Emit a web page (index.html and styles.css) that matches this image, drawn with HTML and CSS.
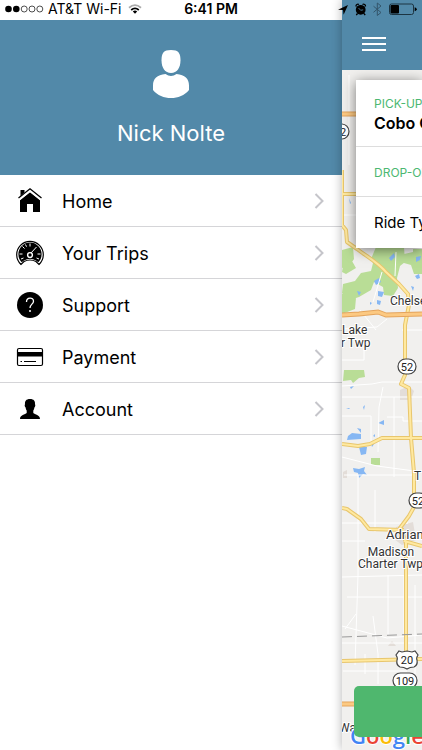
FILE: index.html
```html
<!DOCTYPE html>
<html lang="en">
<head>
    <meta charset="UTF-8">
    <meta name="viewport" content="width=device-width, initial-scale=1.0">
    <title>Menu</title>
    <link rel="stylesheet" href="styles.css">
</head>
<body>
    <!-- Status bar, lies over both panels -->
    <div class="status-bar">
        <div class="status-left">
            <svg width="39" height="8" viewBox="0 0 39 8">
                <circle cx="3.5" cy="4" r="3.3"/>
                <circle cx="11.3" cy="4" r="3.3"/>
                <g fill="none" stroke="#222" stroke-width="0.8">
                    <circle cx="19.2" cy="4" r="3"/>
                    <circle cx="27" cy="4" r="3"/>
                    <circle cx="34.8" cy="4" r="3"/>
                </g>
            </svg>
            <span>AT&amp;T Wi-Fi</span>
            <svg class="wifi" width="14" height="10" viewBox="0 0 14 10" fill="none" stroke-width="1.8">
                <path d="M1 3.7Q7-1.5 13 3.7" stroke="#aaa"/>
                <path d="M3.2 6Q7 2.8 10.8 6" stroke="#000"/>
                <path d="M4.8 7.4Q7 5.7 9.2 7.4L7 9.8Z" fill="#000"/>
            </svg>
        </div>
        <span class="status-time">6:41 PM</span>
        <div class="status-right">
            <svg width="79" height="14" viewBox="0 0 79 14">
                <path d="M0 7.7 10 3 5.6 12.8 5 8Z"/>
                <circle cx="22.7" cy="7.8" r="4.9"/>
                <path d="M18 4.5a2 2 0 0 1 3-2M24.5 2.5a2 2 0 0 1 3 2M19.5 11.5l-1.2 1.6M26 11.5l1.2 1.6" fill="none" stroke="#000" stroke-width="1.3"/>
                <path d="M20.5 6l2.2 2.3 2.500-.5" fill="none" stroke="#5289a9" stroke-width="0.8"/>
                <path d="M35.5 4.2l7.5 6.3-3.700 3V1l3.700 3-7.500 6.300" fill="none" stroke="#34566b" stroke-width="1"/>
                <rect x="51.5" y="2" width="24" height="10.5" rx="2" fill="none" stroke="#1c3442" stroke-width="1"/>
                <rect x="52.5" y="3" width="8.5" height="8.5" rx="1"/>
                <path d="M76.7 5.2q2 .5 2 2t-2 2Z"/>
            </svg>
        </div>
    </div>

    <div class="screen">
        <!-- Side menu -->
        <aside class="drawer">
            <header class="profile">
                <svg width="38" height="50" viewBox="0 0 38 50" fill="#fff">
                    <path d="M19 1c7.500 0 9.500 3 9.500 10.500C28.500 18.500 25 24 19 24S9.500 18.500 9.500 11.500C9.500 4 11.500 1 19 1Z"/>
                    <path d="M13.500 25q5.500 4 11 0C33 26 37 29.500 37 36.500V41c-4.500 5.500-11 8-18 8s-13.500-2.500-18-8v-4.500C1 29.500 5 26 13.500 25Z"/>
                    <path d="M12.500 23q6.500 5 13 0" fill="none" stroke="#5289a9" stroke-width="1.300"/>
                </svg>
                <h1>Nick Nolte</h1>
            </header>
            <nav class="menu">
                <a href="#home">
                    <svg class="icon" width="28" height="28" viewBox="0 0 28 28">
                        <path d="M4 13 14 5l10 8v12h-7v-8h-6v8H4Z"/>
                        <path d="M4.500 3h4v4l-4 3.500Z"/>
                        <path d="M3 12 14 3.200 25 12" fill="none" stroke="#fff" stroke-width="3.200"/>
                        <path d="M2.500 11 14 1.800 25.500 11" fill="none" stroke="#000" stroke-width="1.300"/>
                    </svg>
                    <span>Home</span>
                    <svg class="chevron" width="10" height="16" viewBox="0 0 10 16"><path d="M1.500 1l7 7-7 7"/></svg>
                </a>
                <a href="#trips">
                    <svg class="icon" width="28" height="28" viewBox="0 0 28 28">
                        <path d="M5 25.500A13.300 13.300 0 1 1 23 25.500L20 22.500Q14 19.500 8 22.500Z" fill="#fff" stroke="#000" stroke-width="1.200"/>
                        <path d="M5.700 23.300A11.600 11.600 0 1 1 22.300 23.300L20 21.500Q14 18 8 21.500Z"/>
                        <path d="M14 4.500v3M6.500 7.500l2 2M3.500 15h3M21.500 15h3M5 20l2.500-1M23 20l-2.500-1M9.500 5.500l1 2.200M14.500 14.500l6-6.500" stroke="#fff" stroke-width="1"/>
                        <circle cx="14" cy="16" r="2.400" fill="#000" stroke="#fff" stroke-width="1.400"/>
                    </svg>
                    <span>Your Trips</span>
                    <svg class="chevron" width="10" height="16" viewBox="0 0 10 16"><path d="M1.500 1l7 7-7 7"/></svg>
                </a>
                <a href="#support">
                    <svg class="icon" width="28" height="28" viewBox="0 0 28 28">
                        <circle cx="14" cy="14" r="13"/>
                        <path d="M10.500 11c0-5 7-5 7-.8 0 3-3.500 3-3.500 6.800" fill="none" stroke="#fff" stroke-width="1.300"/>
                        <circle cx="14" cy="20" r="1" fill="#fff"/>
                    </svg>
                    <span>Support</span>
                    <svg class="chevron" width="10" height="16" viewBox="0 0 10 16"><path d="M1.500 1l7 7-7 7"/></svg>
                </a>
                <a href="#payment">
                    <svg class="icon" width="28" height="28" viewBox="0 0 28 28">
                        <rect x="1.500" y="5.500" width="25" height="17" rx="1.500" fill="#fff" stroke="#000" stroke-width="1.200"/>
                        <path d="M1.500 9h25v4.500h-25Z"/>
                        <path d="M4.500 18.500h1.500M8 18.500h12" stroke="#000" stroke-width="1"/>
                    </svg>
                    <span>Payment</span>
                    <svg class="chevron" width="10" height="16" viewBox="0 0 10 16"><path d="M1.500 1l7 7-7 7"/></svg>
                </a>
                <a href="#account">
                    <svg class="icon" width="28" height="28" viewBox="0 0 28 28">
                        <path d="M14 4c4 0 5.200 2.200 5 5.200.6.600.3 2.500-.5 3.100-.3 1.700-.7 2.500-1.200 3.200v2.500c1.500 1.700 6.700 1.800 6.700 6H4c0-4.200 5.200-4.300 6.700-6v-2.500c-.5-.7-.9-1.500-1.200-3.200-.8-.6-1.100-2.500-.5-3.100C8.800 6.200 10 4 14 4Z"/>
                    </svg>
                    <span>Account</span>
                    <svg class="chevron" width="10" height="16" viewBox="0 0 10 16"><path d="M1.500 1l7 7-7 7"/></svg>
                </a>
            </nav>
        </aside>

        <!-- Booking page, pushed to the right -->
        <main class="page">
            <header class="toolbar">
                <button class="menu-button" aria-label="Menu"><span></span><span></span><span></span></button>
            </header>
            <div class="map-area">
                <svg class="map" viewBox="342 70 80 680" preserveAspectRatio="xMinYMin slice">
                    <rect x="342" y="70" width="80" height="680" fill="#f1f0ee"/>
                    <!-- parks -->
                    <g fill="#b9dd96">
                        <path d="M342 250l11-3 1 12-4 6-8 3ZM343 266l9-5 4 7-10 6-4-2ZM376 247h28l1 15-5 4-3 12 1 10-5 8-9-1-1-8-9-5-3 8-12 7-9 3-8-7 1-9 12-3 6-8 10-2 2-8-2-4ZM342 294l8-4 6 8-1 11-13 5ZM413 249h9v25h-8l-3-9-7-2v-9l9-2Z"/>
                        <path d="M344 370h20l1 7-6 1-6 5-2-3-8 1ZM371 458h9v7h-9Z"/>
                    </g>
                    <!-- lakes -->
                    <g fill="#86b7f3">
                        <path d="M389 258l5-5 1 4-4 4ZM374 281l5-3 2 4-5 3ZM378 291l6 1-2 5-4-1ZM416 257l5-1-1 4-4 2ZM415 276l4-2 1 4-3 1ZM357 291l4 1-2 4ZM377 300l4 1-1 4-3-1ZM411 286l3 1-1 4ZM370 302l2 1-2 2ZM349 198l2 5-1 1Z"/>
                        <path d="M348 436l4-3 9 1v5l-14 1ZM359 447h8l-1 7-5 1ZM357 428l4 1v4ZM378 423l6-3v5ZM353 468l6 1 6-2-1 4 3 4-4-1-4 4-1-5-4-1ZM363 407l2-2-1 5ZM350 387l4-1-3 3ZM346 408h4l-1 1ZM373 436l2-2v3ZM371 443l3 1-2 3Z"/>
                    </g>
                    <g fill="#e3ddd8">
                        <path d="M400 390l9-4 5 5-3 9h-11ZM396 527l17-5 3 18-14 5-8-6ZM388 646l4-5 4 5ZM343 472l4-2v8h-4Z"/>
                    </g>
                    <!-- small roads -->
                    <g fill="none" stroke="#fff" stroke-width="1">
                        <path d="M349 75v90M342 215h14M342 386l30-2 10-2h40M342 397h80M383 387l-4 20-1 45M342 416h29v26M394 397v80M342 457l35 9 45 6M344 475h70M358 475v100l-3 90M342 523h66M342 541h23M387 417h16v4h19M342 577l80-2M347 597h75M388 575v60M356 614l-11 15M342 626l45 12 35-3M342 643h80M373 616l5 38v30M365 654v20M343 671h64M415 585v160M404 575v60M364 345v15h-22M342 329l35-2 10-8M360 310l16 20M382 272l-9 30M396 252l-1 24M402 330h20M375 490v42"/>
                    </g>
                    <!-- main roads -->
                    <g fill="none" stroke="#e8c66d" stroke-width="4" stroke-linejoin="round">
                        <path d="M342 194h15M342 170v55l4 5 1 12 10 7c12 9 20 13 29 23l13 12 9 10 1 11-4 20v50l-4 9 8 4 2 50 3 35v34l-5 9-9 12 6 14v120M342 444l16 2 12-2 12-6h40M342 508l5 1 14 10 8 10 35 1M404 541l18 5M342 661l80-2"/>
                    </g>
                    <g fill="none" stroke="#ffe9a0" stroke-width="2" stroke-linejoin="round">
                        <path d="M342 194h15M342 170v55l4 5 1 12 10 7c12 9 20 13 29 23l13 12 9 10 1 11-4 20v50l-4 9 8 4 2 50 3 35v34l-5 9-9 12 6 14v120M342 444l16 2 12-2 12-6h40M342 508l5 1 14 10 8 10 35 1M404 541l18 5M342 661l80-2"/>
                    </g>
                    <g fill="none" stroke="#e4a45c" stroke-width="5">
                        <path d="M342 114h17M342 315l17-1 19-2 8 3 36-1M342 704h14"/>
                    </g>
                    <g fill="none" stroke="#fcc982" stroke-width="3">
                        <path d="M342 114h17M342 315l17-1 19-2 8 3 36-1M342 704h14"/>
                    </g>
                    <path d="M342 637l80-3" fill="none" stroke="#999" stroke-width="1" stroke-dasharray="10 5"/>
                    <!-- road shields -->
                    <g fill="#fff" stroke="#444" stroke-width="1.200">
                        <rect x="333" y="124" width="16" height="15" rx="7.500"/>
                        <rect x="398" y="359" width="18" height="15" rx="7.500"/>
                        <rect x="409" y="493" width="18" height="15" rx="7.500"/>
                        <path d="M399 651l3 1 5-1 5 1 3-1 3 4q-2 3-1 5 1 5-3 7-4 0-7 2-3-2-7-2-4-2-3-7 1-2-1-5Z"/>
                        <rect x="393" y="673" width="24" height="15" rx="7.500"/>
                    </g>
                    <g class="shield-text">
                        <text x="343" y="136">2</text>
                        <text x="407" y="371">52</text>
                        <text x="418" y="505">52</text>
                        <text x="407" y="664">20</text>
                        <text x="405" y="685">109</text>
                    </g>
                    <g class="map-text">
                        <text x="390" y="305">Chelsea</text>
                        <text x="342" y="334">Lake</text>
                        <text x="341" y="347">r Twp</text>
                        <text x="414" y="480">T</text>
                        <text x="386" y="539" class="city">Adrian</text>
                        <text x="391" y="556" text-anchor="middle">Madison</text>
                        <text x="358" y="568">Charter Twp</text>
                        <text x="339" y="732">Wa</text>
                    </g>
                    <text class="map-logo" x="350" y="744"><tspan fill="#4285f4">G</tspan><tspan fill="#ea4335">o</tspan><tspan fill="#fbbc05">o</tspan><tspan fill="#4285f4">g</tspan><tspan fill="#34a853">l</tspan><tspan fill="#ea4335">e</tspan></text>
                </svg>
                <section class="trip-card">
                    <div class="trip-row pickup">
                        <span class="label">PICK-UP</span>
                        <strong>Cobo Center</strong>
                    </div>
                    <div class="trip-row dropoff">
                        <span class="label">DROP-OFF</span>
                    </div>
                    <div class="trip-row ride">Ride Type</div>
                </section>
                <button class="request-button" aria-label="Request ride"></button>
            </div>
        </main>
    </div>
</body>
</html>
```
FILE: styles.css
```css
* {
    box-sizing: border-box;
}
body {
    margin: 0;
    font-family: Inter, "Liberation Sans", sans-serif;
    color: #000;
    background-color: #fff;
    overflow: hidden;
}
svg {
    display: block;
    flex-shrink: 0;
}

/* status bar */
.status-bar {
    position: absolute;
    top: 0;
    left: 0;
    right: 0;
    z-index: 3;
    height: 18px;
    padding: 0 5px;
    display: grid;
    grid-template-columns: 1fr auto 1fr;
    align-items: center;
    font-size: 14px;
    line-height: 18px;
}
.status-left {
    display: flex;
    align-items: center;
    gap: 4px;
}
.wifi {
    margin-left: 2px;
}
.status-time {
    font-weight: 600;
}
.status-right {
    display: flex;
    justify-content: flex-end;
}

.screen {
    display: flex;
    height: 100vh;
}

/* side menu */
.drawer {
    flex: 1;
    padding-top: 20px;
}
.profile {
    height: 155px;
    padding-top: 29px;
    display: flex;
    flex-direction: column;
    align-items: center;
    background-color: #5289a9;
    color: #fff;
}
.profile h1 {
    margin: 20px 0 0;
    font-size: 22px;
    line-height: 28px;
    font-weight: 400;
}
.menu a {
    display: flex;
    align-items: center;
    height: 52px;
    padding: 1px 18px 0 16px;
    border-bottom: 1px solid #d5d5d8;
    color: #000;
    font-size: 18px;
    text-decoration: none;
}
.menu span {
    flex: 1;
    margin-left: 18px;
}
.chevron {
    fill: none;
    stroke: #c5c5ca;
    stroke-width: 2;
}

/* booking page */
.page {
    width: 80px;
    position: relative;
    z-index: 1;
    display: flex;
    flex-direction: column;
    box-shadow: 0 0 10px rgba(0, 0, 0, 0.3);
}
.toolbar {
    height: 70px;
    padding: 34px 0 0 20px;
    background-color: #5289a9;
}
.menu-button {
    display: flex;
    flex-direction: column;
    gap: 4px;
    width: 24px;
    padding: 3px 0;
    border: none;
    background: none;
}
.menu-button span {
    height: 2px;
    background-color: #fff;
}
.map-area {
    flex: 1;
    position: relative;
    display: flex;
    flex-direction: column;
    justify-content: space-between;
    padding: 10px 0 13px 12px;
    overflow: hidden;
}
.map {
    position: absolute;
    top: 0;
    left: 0;
    width: 100%;
    height: 100%;
}
.map-text {
    font-family: Roboto, sans-serif;
    font-size: 12px;
    fill: #333;
    stroke: #fff;
    stroke-width: 2px;
    paint-order: stroke;
}
.map-text .city {
    font-size: 13px;
}
.shield-text {
    font-family: Roboto, sans-serif;
    font-size: 11px;
    text-anchor: middle;
    fill: #222;
}
.map-logo {
    font-family: "Open Sans", sans-serif;
    font-size: 22px;
    font-weight: 600;
    stroke: #fff;
    stroke-width: 2px;
    paint-order: stroke;
}
.trip-card {
    position: relative;
    margin-left: 2px;
    background-color: #fff;
    box-shadow: 0 2px 12px rgba(0, 0, 0, 0.5);
    white-space: nowrap;
}
.trip-row {
    display: flex;
    flex-direction: column;
    justify-content: center;
    height: 50px;
    padding: 2px 0 0 18px;
    font-size: 16px;
    line-height: 20px;
}
.trip-row + .trip-row {
    border-top: 1px solid #ddd;
}
.trip-row.pickup {
    height: 66px;
}
.trip-row.ride {
    height: 52px;
    padding-top: 0;
    font-size: 15px;
}
.trip-row strong {
    font-weight: 600;
}
.label {
    color: #4cb871;
    font-size: 12px;
    line-height: 18px;
}
.request-button {
    position: relative;
    height: 51px;
    border: none;
    border-radius: 5px 0 0 5px;
    background-color: #4fb76e;
}
```
